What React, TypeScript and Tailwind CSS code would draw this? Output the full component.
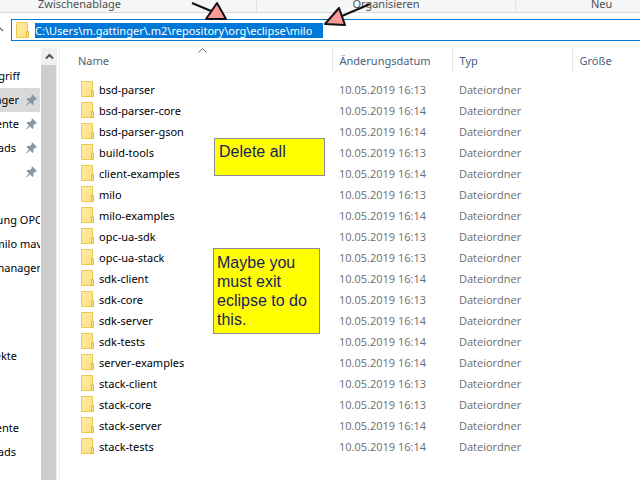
import React from "react";

const dirs: [string, string][] = [
  ["bsd-parser", "13"],
  ["bsd-parser-core", "14"],
  ["bsd-parser-gson", "14"],
  ["build-tools", "13"],
  ["client-examples", "14"],
  ["milo", "13"],
  ["milo-examples", "14"],
  ["opc-ua-sdk", "13"],
  ["opc-ua-stack", "13"],
  ["sdk-client", "14"],
  ["sdk-core", "13"],
  ["sdk-server", "14"],
  ["sdk-tests", "14"],
  ["server-examples", "14"],
  ["stack-client", "13"],
  ["stack-core", "13"],
  ["stack-server", "14"],
  ["stack-tests", "14"],
];

function Folder() {
  return (
    <svg width="13" height="17" viewBox="0 0 13 17" className="block shrink-0" aria-hidden="true">
      <defs>
        <linearGradient id="folder" x1="0" y1="0" x2="1" y2="1">
          <stop offset="0" stopColor="#ffeca8" />
          <stop offset="1" stopColor="#fddf7e" />
        </linearGradient>
      </defs>
      <path d="M.5.5h11v15H.5z" fill="url(#folder)" stroke="#ecc94f" />
      <path d="M10.5 9.5h2v6h-2z" fill="#fbe08a" stroke="#e6bd3a" />
    </svg>
  );
}

function Pin() {
  return (
    <svg width="11" height="12" viewBox="0 0 11 12" className="block shrink-0" aria-hidden="true">
      <path d="M6 0l5 5-1 1-1-.5L7.500 7.500 7.500 10 6.500 11 4 8.500.5 11.500 0 11 3 7.500.5 5l1-1H4L6 2 5.500 1z" fill="#8a97a2" />
    </svg>
  );
}

function Arrow({ className, line, head }: { className: string; line: string; head: string }) {
  return (
    <svg width="52" height="30" viewBox="0 0 52 30" className={className} aria-hidden="true">
      <path d={line} stroke="#111" strokeWidth="2" fill="none" />
      <path d={head} fill="#ff9999" stroke="#111" strokeWidth="2" strokeLinejoin="round" />
    </svg>
  );
}

function NavItem({ text, w, pinned, active }: { text: string; w: string; pinned?: boolean; active?: boolean }) {
  return (
    <li>
      <a href="#" className={`flex h-6 w-10 items-center justify-between overflow-hidden pr-[3px] text-black ${active ? "bg-[#d9d9d9]" : ""}`}>
        <span className={`flex shrink-0 justify-end overflow-hidden whitespace-nowrap ${w}`}>{text}</span>
        {pinned && <Pin />}
      </a>
    </li>
  );
}

export default function App() {
  return (
    <div className="relative flex h-screen flex-col overflow-hidden bg-white font-['Noto_Sans','Open_Sans',sans-serif] text-[11px]">
      <header className="flex h-[13px] shrink-0 items-end border-b border-[#dadbdc] bg-[#f5f6f7] text-[#505050]">
        <div className="flex h-full w-[257px] items-end border-r border-[#e2e3e4] pl-[38px] leading-4">Zwischenablage</div>
        <div className="flex h-full w-[259px] items-end justify-center border-r border-[#e2e3e4] leading-4">Organisieren</div>
        <div className="flex h-full grow items-end pl-[75px] leading-4">Neu</div>
      </header>

      <div className="flex h-[35px] shrink-0 items-start pt-[6px]">
        <svg width="11" height="22" viewBox="0 0 11 22" className="block shrink-0" aria-hidden="true">
          <path d="M-3 12L0 9l3 3" fill="none" stroke="#777" strokeWidth="1.500" />
        </svg>
        <label className="flex h-[22px] grow items-center gap-[6px] border border-r-0 border-[#0078d7] pl-1">
          <Folder />
          <input
            aria-label="Adresse"
            readOnly
            value="C:\Users\m.gattinger\.m2\repository\org\eclipse\milo"
            className="h-[15px] w-72 bg-[#0078d7] leading-[15px] text-white outline-none"
          />
        </label>
      </div>

      <main className="flex min-h-0 grow">
        <nav className="w-[41px] shrink-0 overflow-hidden pt-4">
          <ul>
            <NavItem text="griff" w="w-[20px]" />
            <NavItem text="inger" w="w-[19px]" pinned active />
            <NavItem text="ente" w="w-[19px]" pinned />
            <NavItem text="ads" w="w-4" pinned />
            <NavItem text="" w="w-4" pinned />
          </ul>
          <ul className="pt-6">
            <NavItem text="ung OPC" w="w-[42px]" />
            <NavItem text="milo mav" w="w-[42px]" />
            <NavItem text="manager" w="w-[41px]" />
          </ul>
          <ul className="pt-16">
            <NavItem text="ekte" w="w-[17px]" />
          </ul>
          <ul className="pt-12">
            <NavItem text="ente" w="w-[19px]" />
            <NavItem text="ads" w="w-4" />
          </ul>
        </nav>
        <div className="flex w-4 shrink-0 flex-col bg-[#f0f0f0]">
          <button aria-label="Nach oben" className="flex h-[17px] items-center justify-center">
            <svg width="9" height="7" viewBox="0 0 9 7" aria-hidden="true">
              <path d="M1 5.500L4.500 2 8 5.500" fill="none" stroke="#505050" strokeWidth="2" />
            </svg>
          </button>
          <div className="mr-px grow bg-[#cdcdcd]" />
        </div>
        <section className="ml-[2px] min-w-0 grow border-l border-[#f0f0f0]">
          <table className="w-full table-fixed border-collapse text-left whitespace-nowrap">
            <colgroup>
              <col className="w-[272px]" />
              <col className="w-[120px]" />
              <col className="w-[120px]" />
              <col />
            </colgroup>
            <thead className="text-[#4c607a]">
              <tr className="h-[25px]">
                <th className="relative border-r border-[#e5e5e5] p-0 pt-0.5 pl-[18px] font-normal">
                  Name
                  <svg width="9" height="5" viewBox="0 0 9 5" className="absolute top-0 left-[138px]" aria-hidden="true">
                    <path d="M.5 4.500l4-4 4 4" fill="none" stroke="#666" />
                  </svg>
                </th>
                <th className="border-r border-[#e5e5e5] p-0 pt-0.5 pl-[7px] font-normal">Änderungsdatum</th>
                <th className="border-r border-[#e5e5e5] p-0 pt-0.5 pl-[7px] font-normal">Typ</th>
                <th className="p-0 pt-0.5 pl-[7px] font-normal">Größe</th>
              </tr>
            </thead>
            <tbody className="text-[#6d6d6d] before:block before:h-[6px]">
              {dirs.map(([name, min]) => (
                <tr key={name} className="h-[21px]">
                  <td className="p-0 pl-[21px] text-black">
                    <span className="flex items-center gap-[5px]">
                      <Folder />
                      <span className="pt-0.5">{name}</span>
                    </span>
                  </td>
                  <td className="p-0 pt-0.5 pl-[7px] font-['Open_Sans',sans-serif]">10.05.2019 16:{min}</td>
                  <td className="p-0 pt-0.5 pl-[7px] font-['Open_Sans',sans-serif]">Dateiordner</td>
                  <td />
                </tr>
              ))}
            </tbody>
          </table>
        </section>
      </main>

      <p className="absolute top-[138px] left-[214px] h-[38px] w-[111px] border border-[#8c8c98] bg-[#ffff00] pt-[3px] pl-1 font-['Liberation_Sans',Arial,sans-serif] text-base leading-[19px] text-[#1c1c60]">
        Delete all
      </p>
      <p className="absolute top-[248px] left-[213px] h-[86px] w-[107px] border border-[#8c8c98] bg-[#ffff00] pt-1 pl-[3px] font-['Liberation_Sans',Arial,sans-serif] text-base leading-[19px] text-[#1c1c60]">
        Maybe you must exit eclipse to do this.
      </p>
      <Arrow className="absolute top-0 left-[186px]" line="M6 3L25 11" head="M31 3L20 19H40z" />
      <Arrow className="absolute top-0 left-[320px]" line="M50 4L22 16" head="M19 8L5 24 25 25z" />
    </div>
  );
}
